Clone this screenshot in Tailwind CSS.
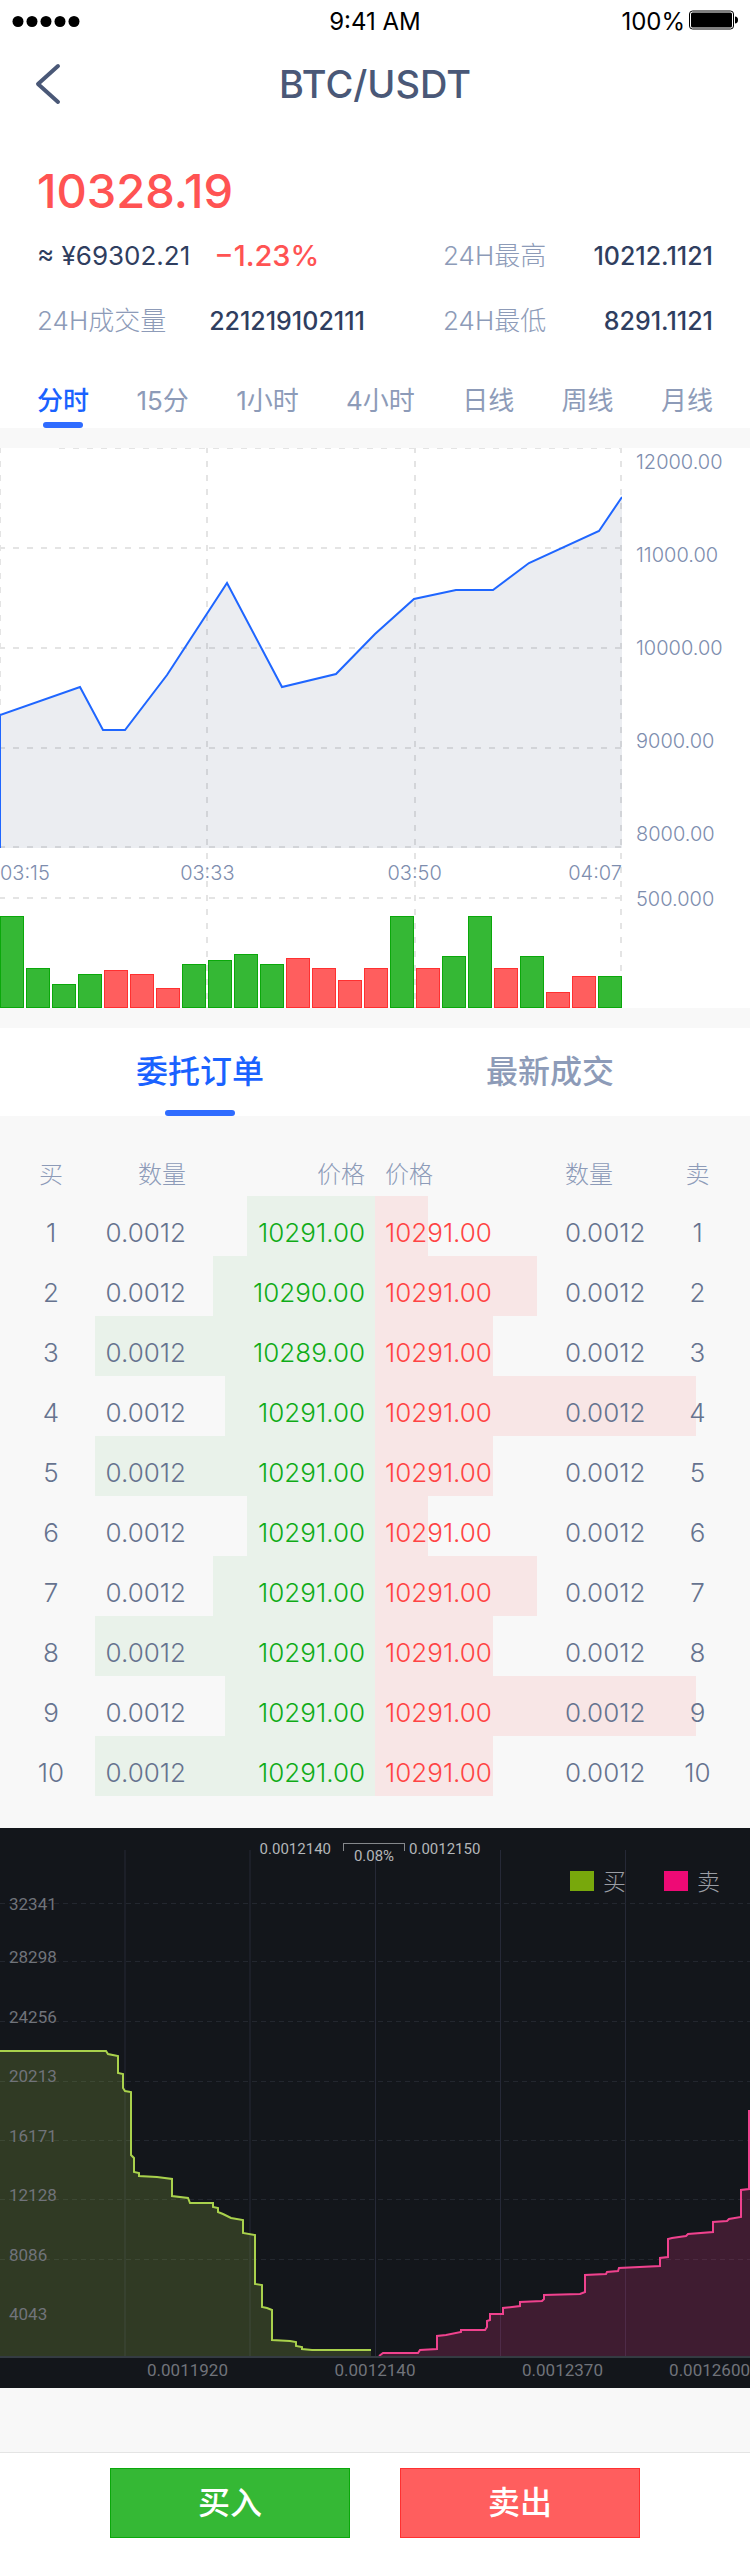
<!DOCTYPE html>
<html lang="zh-CN">

<head>
    <meta charset="UTF-8">
    <meta name="viewport" content="width=device-width, initial-scale=1.0">
    <title>BTC/USDT</title>
    <script src="https://cdn.jsdelivr.net/npm/@tailwindcss/browser@4"></script>
    <style>
        body {
            font-family: Inter, 'Noto Sans CJK SC', sans-serif;
        }
    </style>
</head>

<body class="bg-[#f8f8f8] text-[#2f3e5f]">

    <!-- Status bar -->
    <div class="grid grid-cols-3 items-center h-10 px-3 pt-1 bg-white text-black text-2xl leading-9">
        <svg class="w-[68px] h-3" viewBox="0 0 68 12" aria-hidden="true">
            <circle cx="6" cy="5.500" r="5.500" />
            <circle cx="20" cy="5.500" r="5.500" />
            <circle cx="34" cy="5.500" r="5.500" />
            <circle cx="48" cy="5.500" r="5.500" />
            <circle cx="62" cy="5.500" r="5.500" />
        </svg>
        <span class="text-center">9:41 AM</span>
        <span class="flex items-center justify-end gap-1">
            100%
            <svg class="w-[49px] h-5 mb-1" viewBox="0 0 49 20" aria-hidden="true">
                <rect x="0.500" y="1" width="44" height="18" rx="3" fill="none" stroke="#000" />
                <rect x="2" y="2.500" width="41" height="15" rx="1.500" />
                <path d="M46 6.500c2 0 3 1.500 3 3.500s-1 3.500-3 3.500z" />
            </svg>
        </span>
    </div>

    <!-- Header -->
    <header class="grid grid-cols-[60px_1fr_60px] items-center h-[88px] px-[34px] bg-white">
        <button type="button" aria-label="返回">
            <svg class="w-7 h-11" viewBox="0 0 28 44" fill="none" stroke="#4a5877" stroke-width="4"
                stroke-linecap="round" stroke-linejoin="round">
                <path d="M24 4L4 22l20 18" />
            </svg>
        </button>
        <h1 class="text-center text-[38px] leading-[48px] font-medium text-[#4a5877]">BTC/USDT</h1>
    </header>

    <!-- Ticker -->
    <section class="px-[37px] pt-[33px] bg-white text-[26px] leading-10">
        <p class="text-[47px] leading-[60px] font-medium text-[#ff5353]">10328.19</p>
        <div class="flex justify-between mt-[15px]">
            <div class="flex gap-6">
                <span>≈ ¥69302.21</span>
                <span class="text-[29px] font-medium text-[#ff5353]">−1.23%</span>
            </div>
            <div class="flex justify-between w-[270px]">
                <span class="font-light text-[#8d9bb8]">24H最高</span>
                <span class="text-[25px] font-medium">10212.1121</span>
            </div>
        </div>
        <div class="flex justify-between mt-[25px]">
            <div class="flex gap-[43px]">
                <span class="font-light text-[#8d9bb8]">24H成交量</span>
                <span class="text-[25px] font-medium">221219102111</span>
            </div>
            <div class="flex justify-between w-[270px]">
                <span class="font-light text-[#8d9bb8]">24H最低</span>
                <span class="text-[25px] font-medium">8291.1121</span>
            </div>
        </div>
        <nav class="flex justify-between mt-10 text-[#8d9bb8]">
            <button type="button" class="flex flex-col items-center gap-px font-medium text-[#1a62ff]">
                分时
                <span class="w-10 h-[6px] rounded-full bg-[#2f6cff]"></span>
            </button>
            <button type="button" class="pb-[7px]">15分</button>
            <button type="button" class="pb-[7px]">1小时</button>
            <button type="button" class="pb-[7px]">4小时</button>
            <button type="button" class="pb-[7px]">日线</button>
            <button type="button" class="pb-[7px]">周线</button>
            <button type="button" class="pb-[7px]">月线</button>
        </nav>
    </section>

    <!-- Price and volume chart -->
    <section class="flex my-5 bg-white text-xl leading-7 font-light text-[#7d8dae]">
        <div class="relative flex-1">
            <svg class="absolute inset-0 w-full h-full" viewBox="0 0 622 560" preserveAspectRatio="none"
                aria-hidden="true">
                <g stroke="#e4e4e4" stroke-width="2" stroke-dasharray="6 8">
                    <path d="M59 0H622" />
                    <path d="M-1 100H622M-1 200H622M-1 300H622M-1 399H622M-1 450H622" />
                    <path d="M0 -1V399M207 -1V560M415 -1V560M621 -1V560" />
                </g>
                <path fill="#3e4f78" fill-opacity="0.100"
                    d="M0 267L80 239L103 282H125L167 227L227 135L282 239L336 226L375 186L414 151L456 142H493L529 115L599 83L622 49V400H0Z" />
                <path fill="none" stroke="#1f66ff" stroke-width="2"
                    d="M0 400V267L80 239L103 282H125L167 227L227 135L282 239L336 226L375 186L414 151L456 142H493L529 115L599 83L622 49" />
            </svg>
            <div class="relative grid grid-cols-6 pt-[411px]">
                <span>03:15</span>
                <span class="col-span-2 text-center">03:33</span>
                <span class="col-span-2 text-center">03:50</span>
                <span class="text-right">04:07</span>
            </div>
            <div id="volumeBars" class="relative flex items-end gap-[2px] h-[121px]"></div>
        </div>
        <div class="w-32 pl-[14px]">
            <div class="flex flex-col justify-between h-[400px]">
                <span>12000.00</span>
                <span>11000.00</span>
                <span>10000.00</span>
                <span>9000.00</span>
                <span>8000.00</span>
            </div>
            <span class="block mt-[37px]">500.000</span>
        </div>
    </section>

    <!-- Order tabs -->
    <nav class="grid grid-cols-2 px-[25px] bg-white text-[32px] leading-[44px] font-medium text-[#8d9bb8]">
        <button type="button" class="flex flex-col items-center gap-4 pt-[22px] text-[#1a62ff]">
            委托订单
            <span class="w-[70px] h-[6px] rounded-full bg-[#2f6cff]"></span>
        </button>
        <button type="button" class="pt-[22px] pb-[22px]">最新成交</button>
    </nav>

    <!-- Order book -->
    <section class="grid grid-cols-2 pb-8 text-[26px] leading-[46px] font-light text-[#66738f]">
        <table class="w-full table-fixed">
            <thead>
                <tr class="h-20 text-2xl text-[#8d9bb8]">
                    <th class="w-[102px] pt-[38px] pb-0 font-light">买</th>
                    <th class="w-[84px] pt-[38px] pb-0 font-light text-right">数量</th>
                    <th class="pt-[38px] pb-0 pr-[10px] font-light text-right">价格</th>
                </tr>
            </thead>
            <tbody id="buyRows"></tbody>
        </table>
        <table class="w-full table-fixed">
            <thead>
                <tr class="h-20 text-2xl text-[#8d9bb8]">
                    <th class="pt-[38px] pb-0 pl-[10px] font-light text-left">价格</th>
                    <th class="w-[80px] pt-[38px] pb-0 font-light text-left">数量</th>
                    <th class="w-[105px] pt-[38px] pb-0 font-light">卖</th>
                </tr>
            </thead>
            <tbody id="sellRows"></tbody>
        </table>
    </section>

    <!-- Depth chart -->
    <section class="relative h-[560px] bg-[#13161b] text-[17px] leading-5 text-[#70737a] font-[Roboto]">
        <svg class="absolute inset-0 w-full h-full" viewBox="0 0 750 560" preserveAspectRatio="none"
            aria-hidden="true">
            <path stroke="#262937" d="M125 22V528M250 22V528M375.500 22V528M500.500 22V528M625.500 22V528" />
            <path stroke="#23272f" stroke-dasharray="5 4"
                d="M0 75.500H750M0 133.500H750M0 193.500H750M0 253.500H750M0 312.500H750M0 371.500H750M0 431.500H750" />
            <path fill="#a5cc4a" fill-opacity="0.200"
                d="M0 223H106L108 226L118 228V245L123 246V260L125 263L131 264V327L134 330V344L139 345V348L157 349L172 351V368L188 370L190 375H213V379L218 380V384L223 386L231 390L243 392V405L255 407V456L262 457V479L267 480L272 482V512L290 513L296 514V518L302 519V521L312 522H371V528H0Z" />
            <path fill="none" stroke="#a9d14c" stroke-width="2"
                d="M0 223H106L108 226L118 228V245L123 246V260L125 263L131 264V327L134 330V344L139 345V348L157 349L172 351V368L188 370L190 375H213V379L218 380V384L223 386L231 390L243 392V405L255 407V456L262 457V479L267 480L272 482V512L290 513L296 514V518L302 519V521L312 522H371" />
            <path fill="#f0388a" fill-opacity="0.200"
                d="M379 528L383 525H418L420 522L437 521V508L446 507L461 504V502H485L487 499V493L490 492V486H503V480L520 478V474L542 473L544 471V467L580 466L585 464V447L606 446L607 444L618 443L619 440L660 438V430L668 429V411L672 410L686 408L688 406L713 404V394L727 393L729 391L741 389V362L749 361V282H750V528Z" />
            <path fill="none" stroke="#f0428e" stroke-width="2"
                d="M379 528L383 525H418L420 522L437 521V508L446 507L461 504V502H485L487 499V493L490 492V486H503V480L520 478V474L542 473L544 471V467L580 466L585 464V447L606 446L607 444L618 443L619 440L660 438V430L668 429V411L672 410L686 408L688 406L713 404V394L727 393L729 391L741 389V362L749 361V282" />
            <path stroke="#343b42" stroke-width="2" d="M0 529H750" />
        </svg>

        <div class="relative flex justify-center gap-1 h-[43px] pt-[11px] pr-[6px] text-[15px] text-[#b4b6b9]">
            <span class="w-20 text-right pr-1">0.0012140</span>
            <span class="relative w-[62px] h-2 mt-1 ml-1 border border-b-0 border-[#85888c]">
                <span class="absolute top-[2px] inset-x-0 text-center">0.08%</span>
            </span>
            <span class="w-20">0.0012150</span>
        </div>
        <div
            class="relative flex justify-end gap-[38px] h-5 pr-[30px] text-[23px] leading-[18px] font-light text-[#9a9da4] font-[Noto_Sans_CJK_SC]">
            <span class="flex gap-[9px]"><i class="w-6 h-5 bg-[#78a80c]"></i>买</span>
            <span class="flex gap-[9px]"><i class="w-6 h-5 bg-[#ee0a75]"></i>卖</span>
        </div>
        <div class="relative mt-[3px] pl-[9px]">
            <span class="block mb-[33px]">32341</span>
            <div class="flex flex-col justify-between h-[377px]">
                <span>28298</span>
                <span>24256</span>
                <span>20213</span>
                <span>16171</span>
                <span>12128</span>
                <span>8086</span>
                <span>4043</span>
            </div>
        </div>
        <div class="relative grid grid-cols-8 mt-9 text-center">
            <span class="col-start-2 col-span-2">0.0011920</span>
            <span class="col-span-2">0.0012140</span>
            <span class="col-span-2">0.0012370</span>
            <span class="text-right">0.0012600</span>
        </div>
    </section>

    <!-- Trade buttons -->
    <footer
        class="flex justify-center gap-[50px] mt-16 pt-[15px] pb-[14px] border-t border-[#e4e4e4] bg-white text-[32px] font-medium text-white">
        <button type="button" class="w-60 h-[70px] border border-[#0aa80a] bg-[#35b835]">买入</button>
        <button type="button" class="w-60 h-[70px] border border-[#ff3030] bg-[#ff5e5e]">卖出</button>
    </footer>

    <script>
        // Volume bars: [height, is rising]
        const volumes = [
            [92, 1], [40, 1], [24, 1], [34, 1], [38, 0], [34, 0], [20, 0], [44, 1],
            [48, 1], [54, 1], [44, 1], [50, 0], [40, 0], [28, 0], [40, 0], [92, 1],
            [40, 0], [52, 1], [92, 1], [40, 0], [52, 1], [16, 0], [32, 0], [32, 1]
        ];

        // Order book: price and depth (share of the half width, in 1/375)
        const buys = [
            ['10291.00', 128], ['10290.00', 162], ['10289.00', 280], ['10291.00', 150], ['10291.00', 280],
            ['10291.00', 128], ['10291.00', 162], ['10291.00', 280], ['10291.00', 150], ['10291.00', 280]
        ];
        const sells = [
            ['10291.00', 53], ['10291.00', 162], ['10291.00', 118], ['10291.00', 321], ['10291.00', 118],
            ['10291.00', 53], ['10291.00', 162], ['10291.00', 118], ['10291.00', 321], ['10291.00', 118]
        ];

        document.getElementById('volumeBars').innerHTML = volumes.map(([height, up]) => {
            const color = up ? 'border-[#0aa80a] bg-[#35b835]' : 'border-[#ff3030] bg-[#ff5e5e]';
            return `<div class="flex-1 border ${color}" style="height:${height}px"></div>`;
        }).join('');

        function depthStyle(side, color, depth) {
            const percent = depth / 375 * 100;
            return `background:linear-gradient(to ${side}, ${color} ${percent}%, transparent ${percent}%)`;
        }

        document.getElementById('buyRows').innerHTML = buys.map(([price, depth], i) => `
            <tr class="h-[60px]" style="${depthStyle('left', '#e9f2ea', depth)}">
                <td class="pt-[14px] pb-0 text-center">${i + 1}</td>
                <td class="pt-[14px] pb-0 text-right">0.0012</td>
                <td class="pt-[14px] pb-0 pr-[10px] text-right text-[#10ac18]">${price}</td>
            </tr>`).join('');

        document.getElementById('sellRows').innerHTML = sells.map(([price, depth], i) => `
            <tr class="h-[60px]" style="${depthStyle('right', '#f8e6e6', depth)}">
                <td class="pt-[14px] pb-0 pl-[10px] text-[#ff4444]">${price}</td>
                <td class="pt-[14px] pb-0">0.0012</td>
                <td class="pt-[14px] pb-0 text-center">${i + 1}</td>
            </tr>`).join('');
    </script>

</body>

</html>
